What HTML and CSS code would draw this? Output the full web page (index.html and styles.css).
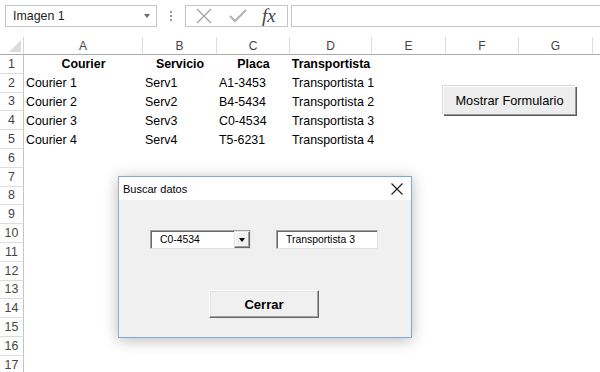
FILE: index.html
```html
<!DOCTYPE html>
<html>
<head>
<meta charset="utf-8">
<link rel="stylesheet" href="styles.css">
</head>
<body>
<div class="app">
  <div class="toolbar">
    <div class="namebox"><span>Imagen 1</span><span class="caret"></span></div>
    <div class="dots"><i></i><i></i><i></i></div>
    <div class="fxgroup">
      <svg class="ico-x" width="16" height="16" viewBox="0 0 16 16"><path d="M1 1L15 15M15 1L1 15" stroke="#a6a6a6" stroke-width="1.4" fill="none"/></svg>
      <svg class="ico-check" width="18" height="14" viewBox="0 0 18 14"><path d="M1 7L6 12L17 1" stroke="#b0b0b0" stroke-width="2" fill="none"/></svg>
      <span class="fx">fx</span>
    </div>
    <div class="formula"></div>
  </div>

  <div class="sheet">
    <div class="corner"><span class="tri"></span></div>
    <div class="ch">A</div><div class="ch">B</div><div class="ch">C</div><div class="ch">D</div><div class="ch">E</div><div class="ch">F</div><div class="ch">G</div><div class="ch last"></div>

    <div class="rh">1</div><div class="c b">Courier</div><div class="c b">Servicio</div><div class="c b">Placa</div><div class="c b">Transportista</div><div class="c"></div><div class="c"></div><div class="c"></div><div class="c"></div>
    <div class="rh">2</div><div class="c">Courier 1</div><div class="c">Serv1</div><div class="c">A1-3453</div><div class="c">Transportista 1</div><div class="c"></div><div class="c"></div><div class="c"></div><div class="c"></div>
    <div class="rh">3</div><div class="c">Courier 2</div><div class="c">Serv2</div><div class="c">B4-5434</div><div class="c">Transportista 2</div><div class="c"></div><div class="c"></div><div class="c"></div><div class="c"></div>
    <div class="rh">4</div><div class="c">Courier 3</div><div class="c">Serv3</div><div class="c">C0-4534</div><div class="c">Transportista 3</div><div class="c"></div><div class="c"></div><div class="c"></div><div class="c"></div>
    <div class="rh">5</div><div class="c">Courier 4</div><div class="c">Serv4</div><div class="c">T5-6231</div><div class="c">Transportista 4</div><div class="c"></div><div class="c"></div><div class="c"></div><div class="c"></div>
    <div class="rh">6</div><div class="c span"></div>
    <div class="rh">7</div><div class="c span"></div>
    <div class="rh">8</div><div class="c span"></div>
    <div class="rh">9</div><div class="c span"></div>
    <div class="rh">10</div><div class="c span"></div>
    <div class="rh">11</div><div class="c span"></div>
    <div class="rh">12</div><div class="c span"></div>
    <div class="rh">13</div><div class="c span"></div>
    <div class="rh">14</div><div class="c span"></div>
    <div class="rh">15</div><div class="c span"></div>
    <div class="rh">16</div><div class="c span"></div>
    <div class="rh">17</div><div class="c span"></div>
  </div>

  <button class="showbtn">Mostrar Formulario</button>

  <div class="dialog">
    <div class="titlebar">
      <span class="title">Buscar datos</span>
      <svg class="close" width="12" height="12" viewBox="0 0 12 12"><path d="M0.5 0.5L11.5 11.5M11.5 0.5L0.5 11.5" stroke="#1a1a1a" stroke-width="1.1" fill="none"/></svg>
    </div>
    <div class="dbody">
      <div class="fields">
        <div class="combo"><span class="val">C0-4534</span><span class="dropbtn"><span class="dtri"></span></span></div>
        <div class="textbox">Transportista 3</div>
      </div>
      <button class="closebtn">Cerrar</button>
    </div>
  </div>
</div>
</body>
</html>
```

FILE: styles.css
```css
html, body {
  margin: 0;
  padding: 0;
  background: #fff;
  overflow: hidden;
}
body {
  font-family: "Liberation Sans", Arial, sans-serif;
  color: #000;
}
.app {
  position: relative;
  width: 600px;
  height: 372px;
  overflow: hidden;
}

/* toolbar */
.toolbar {
  height: 37px;
  display: flex;
  align-items: flex-start;
  padding-top: 5px;
  padding-left: 5px;
  box-sizing: border-box;
}
.namebox {
  width: 152px;
  height: 22px;
  box-sizing: border-box;
  border: 1px solid #c6c6c6;
  display: flex;
  align-items: center;
  justify-content: space-between;
  padding: 0 6px 0 7px;
  font-size: 12.4px;
  color: #222;
}
.caret {
  width: 0;
  height: 0;
  border-left: 3.5px solid transparent;
  border-right: 3.5px solid transparent;
  border-top: 4px solid #6a6a6a;
}
.dots {
  width: 28px;
  height: 22px;
  display: flex;
  flex-direction: column;
  align-items: center;
  justify-content: center;
  gap: 2px;
}
.dots i {
  width: 2px;
  height: 2px;
  background: #9a9a9a;
}
.fxgroup {
  width: 103px;
  height: 22px;
  box-sizing: border-box;
  border: 1px solid #c6c6c6;
  display: flex;
  align-items: center;
  padding-left: 10px;
}
.ico-x { margin-right: 17px; }
.ico-check { margin-right: 15px; }
.fx {
  font-family: "Liberation Serif", "Times New Roman", serif;
  font-style: italic;
  font-size: 19px;
  color: #444;
  line-height: 1;
  margin-top: -2px;
}
.formula {
  flex: 1;
  height: 22px;
  margin-left: 3px;
  box-sizing: border-box;
  border: 1px solid #c6c6c6;
  border-right: none;
}

/* sheet */
.sheet {
  display: grid;
  grid-template-columns: 24px 119px 74px 73px 82px 74px 73px 74px 1fr;
  grid-template-rows: 18px;
  grid-auto-rows: 18.8px;
  font-size: 12.4px;
}
.corner {
  position: relative;
  border-right: 1px solid #d4d4d4;
  border-bottom: 1px solid #ababab;
  box-sizing: border-box;
}
.tri {
  position: absolute;
  right: 2px;
  bottom: 2px;
  width: 0;
  height: 0;
  border-left: 12px solid transparent;
  border-bottom: 12px solid #dcdcdc;
}
.ch {
  box-sizing: border-box;
  border-right: 1px solid #dcdcdc;
  border-bottom: 1px solid #ababab;
  display: flex;
  align-items: center;
  justify-content: center;
  color: #444;
  font-size: 12px;
}
.ch.last { border-right: none; }
.rh {
  box-sizing: border-box;
  border-right: 1px solid #c4c4c4;
  border-bottom: 1px solid #dcdcdc;
  display: flex;
  align-items: center;
  justify-content: center;
  color: #444;
  font-size: 12.4px;
}
.c {
  display: flex;
  align-items: center;
  padding-left: 2px;
  white-space: nowrap;
  overflow: visible;
  min-width: 0;
}
.c.b {
  font-weight: bold;
  justify-content: center;
  padding-left: 0;
}
.c.span { grid-column: 2 / -1; }

/* overlay button on sheet */
.showbtn {
  position: absolute;
  left: 443px;
  top: 86px;
  width: 133px;
  height: 29px;
  margin: 0;
  padding: 0;
  background: #ededed;
  border: none;
  box-shadow: inset 1px 1px 0 #fff, inset -1px -1px 0 #9a9a9a, 1px 1px 0 #5a5a5a, -1px -1px 0 #d8d8d8;
  font-family: "Liberation Sans", Arial, sans-serif;
  font-size: 12.8px;
  color: #000;
}

/* dialog */
.dialog {
  position: absolute;
  left: 118px;
  top: 176px;
  width: 294px;
  height: 162px;
  box-sizing: border-box;
  border: 1px solid #7ea9d9;
  border-left-color: #9ab0c8;
  background: #f0f0f0;
  box-shadow: 0 2px 14px rgba(0, 0, 0, 0.28);
  display: flex;
  flex-direction: column;
}
.titlebar {
  height: 23px;
  background: #fff;
  display: flex;
  align-items: center;
  justify-content: space-between;
  padding: 0 8px 0 4px;
  flex: none;
}
.title {
  font-size: 11px;
  color: #000;
}
.close { margin-top: 1px; }
.dbody {
  flex: 1;
  display: flex;
  flex-direction: column;
  align-items: center;
  padding-top: 30px;
  padding-right: 2px;
}
.fields {
  display: flex;
  gap: 25px;
}
.combo {
  width: 101px;
  height: 19px;
  box-sizing: border-box;
  background: #fff;
  border: 1px solid #a0a0a0;
  border-right-color: #e3e3e3;
  border-bottom-color: #e3e3e3;
  box-shadow: inset 1px 1px 0 #696969;
  display: flex;
  align-items: center;
  justify-content: space-between;
  padding-left: 9px;
  font-size: 10.4px;
}
.dropbtn {
  width: 16px;
  height: 17px;
  box-sizing: border-box;
  background: #f0f0f0;
  border: 1px solid;
  border-color: #e3e3e3 #696969 #696969 #e3e3e3;
  box-shadow: inset -1px -1px 0 #a0a0a0, inset 1px 1px 0 #fff;
  display: flex;
  align-items: center;
  justify-content: center;
}
.dtri {
  width: 0;
  height: 0;
  border-left: 3.5px solid transparent;
  border-right: 3.5px solid transparent;
  border-top: 4px solid #000;
}
.textbox {
  width: 102px;
  height: 19px;
  box-sizing: border-box;
  background: #fff;
  border: 1px solid #a0a0a0;
  border-right-color: #e3e3e3;
  border-bottom-color: #e3e3e3;
  box-shadow: inset 1px 1px 0 #696969;
  display: flex;
  align-items: center;
  padding-left: 9px;
  font-size: 10.4px;
  white-space: nowrap;
}
.closebtn {
  margin-top: 41px;
  width: 110px;
  height: 28px;
  padding: 0;
  background: #f0f0f0;
  border: 1px solid;
  border-color: #fff #696969 #696969 #fff;
  box-shadow: inset -1px -1px 0 #a0a0a0, inset 1px 1px 0 #e3e3e3;
  font-family: "Liberation Sans", Arial, sans-serif;
  font-weight: bold;
  font-size: 13px;
  color: #000;
}
```
